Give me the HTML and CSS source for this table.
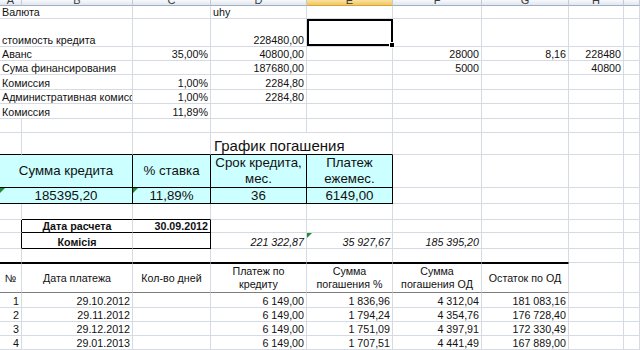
FILE: index.html
```html
<!DOCTYPE html>
<html lang="ru">
<head>
<meta charset="utf-8">
<title>График погашения</title>
<link rel="stylesheet" href="styles.css">
</head>
<body>
<div class="sheet">
  <!-- column headers -->
  <div class="hd"><span>A</span></div>
  <div class="hd"><span>B</span></div>
  <div class="hd"><span>C</span></div>
  <div class="hd"><span>D</span></div>
  <div class="hd sel"><span>E</span></div>
  <div class="hd"><span>F</span></div>
  <div class="hd"><span>G</span></div>
  <div class="hd"><span>H</span></div>
  <div class="hd"><span></span></div>

  <!-- row 1 -->
  <div class="c s2">Валюта</div><div class="c"></div><div class="c">uhy</div><div class="c"></div><div class="c"></div><div class="c"></div><div class="c"></div><div class="c"></div>
  <!-- row 2 -->
  <div class="c s2">стоимость кредита</div><div class="c"></div><div class="c r">228480,00</div><div class="c active"></div><div class="c"></div><div class="c"></div><div class="c"></div><div class="c"></div>
  <!-- row 3 -->
  <div class="c s2">Аванс</div><div class="c r">35,00%</div><div class="c r">40800,00</div><div class="c"></div><div class="c r">28000</div><div class="c r">8,16</div><div class="c r">228480</div><div class="c"></div>
  <!-- row 4 -->
  <div class="c s2">Сума финансирования</div><div class="c"></div><div class="c r">187680,00</div><div class="c"></div><div class="c r">5000</div><div class="c"></div><div class="c r">40800</div><div class="c"></div>
  <!-- row 5 -->
  <div class="c s2">Комиссия</div><div class="c r">1,00%</div><div class="c r">2284,80</div><div class="c"></div><div class="c"></div><div class="c"></div><div class="c"></div><div class="c"></div>
  <!-- row 6 -->
  <div class="c s2">Административная комиссия</div><div class="c r">1,00%</div><div class="c r">2284,80</div><div class="c"></div><div class="c"></div><div class="c"></div><div class="c"></div><div class="c"></div>
  <!-- row 7 -->
  <div class="c s2">Комиссия</div><div class="c r">11,89%</div><div class="c"></div><div class="c"></div><div class="c"></div><div class="c"></div><div class="c"></div><div class="c"></div>
  <!-- row 8 -->
  <div class="c"></div><div class="c"></div><div class="c"></div><div class="c"></div><div class="c"></div><div class="c"></div><div class="c"></div><div class="c"></div><div class="c"></div>
  <!-- row 9: title -->
  <div class="c bb"></div><div class="c bb"></div><div class="c bb"></div><div class="c s2 bb title">График погашения</div><div class="c"></div><div class="c"></div><div class="c"></div><div class="c"></div>
  <!-- row 10: blue header -->
  <div class="c s2 blue"><span>Сумма кредита</span></div><div class="c blue"><span>% ставка</span></div><div class="c blue"><span>Срок кредита,<br>мес.</span></div><div class="c blue"><span>Платеж<br>ежемес.</span></div><div class="c"></div><div class="c"></div><div class="c"></div><div class="c"></div>
  <!-- row 11: blue values -->
  <div class="c s2 blue tri"><span>185395,20</span></div><div class="c blue tri"><span>11,89%</span></div><div class="c blue"><span>36</span></div><div class="c blue"><span>6149,00</span></div><div class="c"></div><div class="c"></div><div class="c"></div><div class="c"></div>
  <!-- row 12 -->
  <div class="c"></div><div class="c bb"></div><div class="c bb"></div><div class="c"></div><div class="c"></div><div class="c"></div><div class="c"></div><div class="c"></div><div class="c"></div>
  <!-- row 13 -->
  <div class="c br"></div><div class="c bb b ctr">Дата расчета</div><div class="c bb br b r">30.09.2012</div><div class="c"></div><div class="c"></div><div class="c"></div><div class="c"></div><div class="c"></div><div class="c"></div>
  <!-- row 14 -->
  <div class="c br"></div><div class="c bb b ctr">Комісія</div><div class="c bb br"></div><div class="c i r">221 322,87</div><div class="c i r tri">35 927,67</div><div class="c i r">185 395,20</div><div class="c"></div><div class="c"></div><div class="c"></div>
  <!-- row 15 -->
  <div class="c bb"></div><div class="c bb"></div><div class="c bb"></div><div class="c bb"></div><div class="c bb"></div><div class="c bb"></div><div class="c bb"></div><div class="c"></div><div class="c"></div>
  <!-- row 16: table header -->
  <div class="c th"><span>№</span></div><div class="c th"><span>Дата платежа</span></div><div class="c th"><span>Кол-во дней</span></div><div class="c th"><span>Платеж по<br>кредиту</span></div><div class="c th"><span>Сумма<br>погашения %</span></div><div class="c th"><span>Сумма<br>погашения ОД</span></div><div class="c th"><span>Остаток по ОД</span></div><div class="c"></div><div class="c"></div>
  <!-- rows 17-20 -->
  <div class="c r">1</div><div class="c r">29.10.2012</div><div class="c"></div><div class="c r">6 149,00</div><div class="c r">1 836,96</div><div class="c r">4 312,04</div><div class="c r">181 083,16</div><div class="c"></div><div class="c"></div>
  <div class="c r">2</div><div class="c r">29.11.2012</div><div class="c"></div><div class="c r">6 149,00</div><div class="c r">1 794,24</div><div class="c r">4 354,76</div><div class="c r">176 728,40</div><div class="c"></div><div class="c"></div>
  <div class="c r">3</div><div class="c r">29.12.2012</div><div class="c"></div><div class="c r">6 149,00</div><div class="c r">1 751,09</div><div class="c r">4 397,91</div><div class="c r">172 330,49</div><div class="c"></div><div class="c"></div>
  <div class="c r">4</div><div class="c r">29.01.2013</div><div class="c"></div><div class="c r">6 149,00</div><div class="c r">1 707,51</div><div class="c r">4 441,49</div><div class="c r">167 889,00</div><div class="c"></div><div class="c"></div>
</div>
</body>
</html>
```
FILE: styles.css
```css
html, body {
  margin: 0;
  padding: 0;
  background: #fff;
  overflow: hidden;
}

.sheet {
  display: grid;
  grid-template-columns: 22px 111px 78px 96px 86px 89px 87px 55px 16px;
  grid-template-rows: 6px 13px 28px 14px 14px 15px 14px 15px 14px 22px 33px 16px 16px 13px 16px 14px 30px 15px 14px 14px 14px;
  width: 640px;
  height: 350px;
  font-family: "Liberation Sans", Arial, sans-serif;
  font-size: 10.7px;
  color: #111;
}

.hd {
  box-sizing: border-box;
  display: flex;
  justify-content: center;
  align-items: flex-end;
  overflow: hidden;
  background: linear-gradient(#f6f8fb, #e2e7ee);
  border-right: 1px solid #c3cad5;
  border-bottom: 1px solid #9fb0c5;
  color: #3a3a3a;
  font-size: 11px;
}

.hd span {
  line-height: 10px;
}

.hd.sel {
  background: linear-gradient(#f9e2a2, #f2c65c);
  border-bottom-color: #d9a53a;
}

.c {
  box-sizing: border-box;
  min-width: 0;
  display: flex;
  align-items: flex-end;
  justify-content: flex-start;
  padding: 0 2px;
  overflow: hidden;
  white-space: nowrap;
  border-right: 1px solid #d6dbe3;
  border-bottom: 1px solid #d6dbe3;
}

.s2 {
  grid-column: span 2;
}

.r {
  justify-content: flex-end;
}

.ctr {
  justify-content: center;
}

.b {
  font-weight: bold;
}

.i {
  font-style: italic;
}

.bb {
  border-bottom-color: #000;
}

.br {
  border-right-color: #000;
}

.title {
  font-size: 15px;
  padding-left: 3px;
}

.blue {
  background: #ccffff;
  border-right-color: #000;
  border-bottom-color: #000;
  font-size: 13.3px;
  line-height: 16px;
  justify-content: center;
  align-items: center;
  text-align: center;
}

.th {
  border-top: 1px solid #000;
  border-bottom-color: #7d7d7d;
  justify-content: center;
  align-items: center;
  text-align: center;
  line-height: 13px;
}

.tri {
  position: relative;
}

.tri::before {
  content: "";
  position: absolute;
  left: 0;
  top: 0;
  border-top: 5px solid #1d8b3a;
  border-right: 5px solid transparent;
}

.active {
  position: relative;
  overflow: visible;
}

.active::after {
  content: "";
  position: absolute;
  left: 0;
  top: 0;
  right: -1px;
  bottom: 0;
  border: 2px solid #000;
}

.active::before {
  content: "";
  position: absolute;
  right: -3px;
  bottom: -2px;
  width: 4px;
  height: 4px;
  background: #000;
  border: 1px solid #fff;
  z-index: 1;
}
```
